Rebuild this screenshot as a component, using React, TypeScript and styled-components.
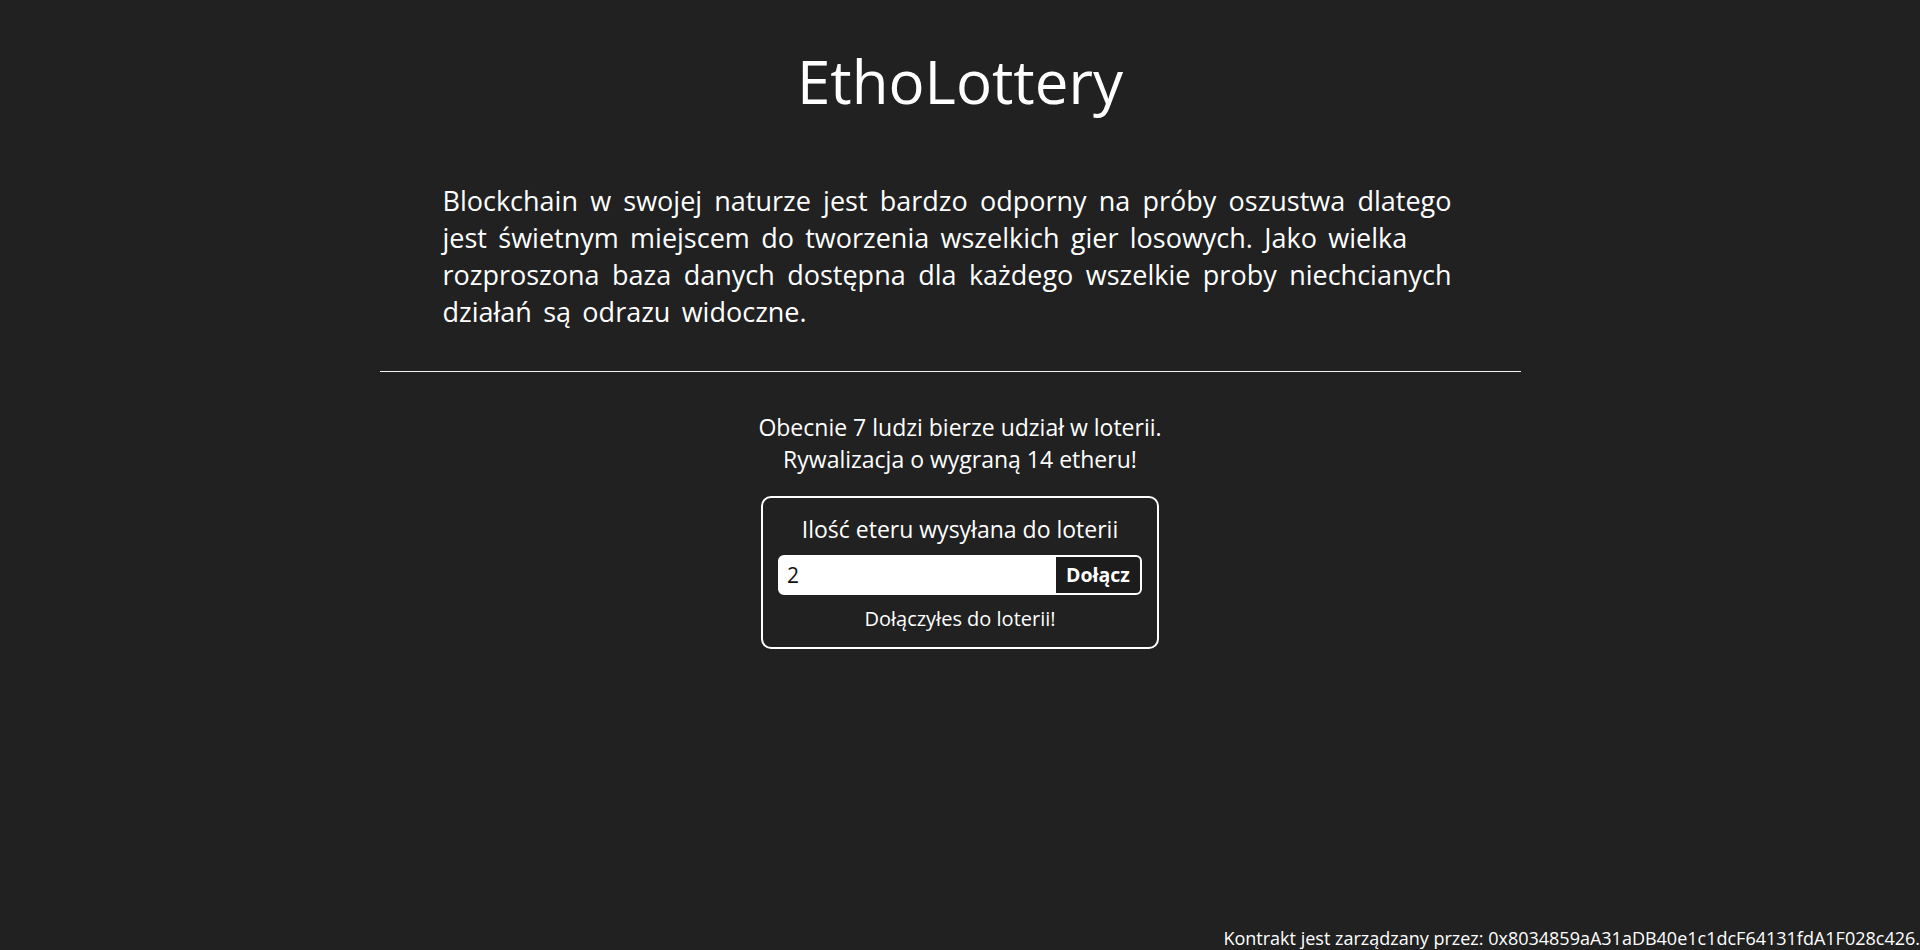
import React from "react";
import styled, { createGlobalStyle } from "styled-components";

const GlobalStyle = createGlobalStyle`
  html, body {
    margin: 0;
    padding: 0;
    background: #212121;
    color: #ffffff;
    font-family: "Open Sans", "Noto Sans", sans-serif;
  }
  * { box-sizing: border-box; }
`;

const Page = styled.div`
  min-height: 100vh;
  display: flex;
  flex-direction: column;
  align-items: center;
`;

const Title = styled.h1`
  margin: 40px 0 0;
  font-size: 60px;
  font-weight: 400;
  line-height: normal;
`;

const Intro = styled.section`
  width: 1141px;
  margin: 60px 20px 0 0;
  display: flex;
  flex-direction: column;
`;

const Paragraph = styled.p`
  margin: 0 0 0 63px;
  width: 1009px;
  font-size: 27px;
  line-height: normal;
  text-align: justify;
  word-spacing: 4.3px;
`;

const Rule = styled.hr`
  width: 100%;
  margin: 41px 0 0;
  border: 0;
  border-top: 1px solid #f2f2f2;
`;

const Stats = styled.div`
  margin-top: 38.5px;
  font-size: 23px;
  line-height: normal;
  text-align: center;
`;

const Card = styled.div`
  margin-top: 21px;
  width: 398px;
  border: 2px solid #ffffff;
  border-radius: 10px;
  padding: 15px 15px 15.5px;
  display: flex;
  flex-direction: column;
  align-items: center;
`;

const Label = styled.div`
  font-size: 23px;
  line-height: normal;
`;

const InputGroup = styled.div`
  margin-top: 10px;
  width: 100%;
  height: 40px;
  display: flex;
  border: 2px solid #ffffff;
  border-radius: 6px;
  overflow: hidden;
  background: #ffffff;
`;

const AmountInput = styled.input`
  flex: 1;
  min-width: 0;
  border: 0;
  outline: none;
  padding: 0 7px;
  font-family: "Open Sans", sans-serif;
  font-size: 21px;
  color: #111111;
  background: #ffffff;
`;

const JoinButton = styled.button`
  width: 84px;
  border: 0;
  background: #1c1c1c;
  color: #ffffff;
  font-family: "Open Sans", sans-serif;
  font-size: 19.5px;
  font-weight: 700;
  padding: 0;
  cursor: pointer;
`;

const Message = styled.div`
  margin-top: 10px;
  font-size: 20px;
  line-height: normal;
`;

const Footer = styled.footer`
  margin-top: auto;
  align-self: flex-end;
  font-size: 18px;
  line-height: normal;
  white-space: nowrap;
`;

export default function App() {
  return (
    <>
      <GlobalStyle />
      <Page>
        <Title>EthoLottery</Title>
        <Intro>
          <Paragraph>
            Blockchain w swojej naturze jest bardzo odporny na próby oszustwa
            dlatego jest świetnym miejscem do tworzenia wszelkich gier
            losowych. Jako wielka
            <br />
            rozproszona baza danych dostępna dla każdego wszelkie proby
            niechcianych działań są odrazu widoczne.
          </Paragraph>
          <Rule />
        </Intro>
        <Stats>
          Obecnie 7 ludzi bierze udział w loterii.
          <br />
          Rywalizacja o wygraną 14 etheru!
        </Stats>
        <Card>
          <Label>Ilość eteru wysyłana do loterii</Label>
          <InputGroup>
            <AmountInput type="number" defaultValue={2} />
            <JoinButton>Dołącz</JoinButton>
          </InputGroup>
          <Message>Dołączyłes do loterii!</Message>
        </Card>
        <Footer>
          Kontrakt jest zarządzany przez:
          0x8034859aA31aDB40e1c1dcF64131fdA1F028c426.
        </Footer>
      </Page>
    </>
  );
}
